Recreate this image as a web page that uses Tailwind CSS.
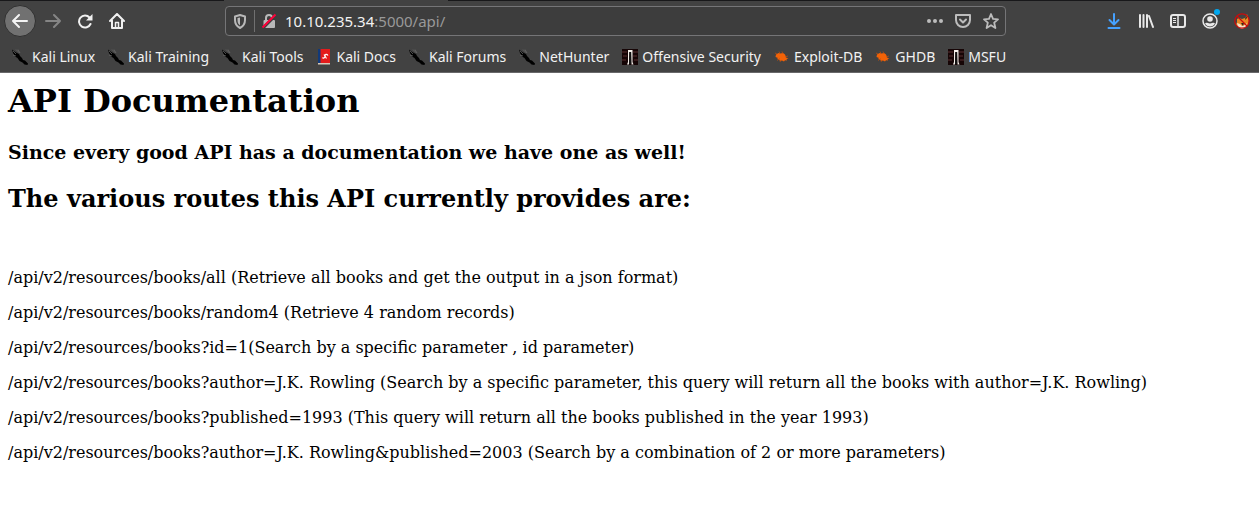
<!DOCTYPE html>
<html lang="en">
<head>
<meta charset="utf-8">
<title>API Documentation</title>
<script src="https://cdn.jsdelivr.net/npm/@tailwindcss/browser@4"></script>
</head>
<body class="bg-white text-black">
<svg class="hidden" aria-hidden="true">
  <symbol id="dragon" viewBox="0 0 16 16"><path fill="#000" d="M0 .5l2.500 2L5 4l2 1 1 2 2 2 1 2 2 .5 3 3-.5 1.500-3-.5-2-2-3-1.500-2-3L3 7.500 1 4z"/><path d="M1 2l3 3M4 .5L7.500 4M6 .5L8 4M1 6l3 1" stroke="#6d6d6d" stroke-width=".7"/></symbol>
  <symbol id="book" viewBox="0 0 16 16"><path fill="#e41b1b" d="M3 0h11v14H3z"/><path fill="#123a7a" d="M2 0h2.500v15H2z"/><path fill="#d8c8b8" d="M2 14h12v1.500H2z"/><path d="M6.500 8.500c1.500 1.500 2.500 0 2.500-1.500s1.500-2.500 3-.5M8 5.500l2.500 4" stroke="#fff" stroke-width="1.200" fill="none"/></symbol>
  <symbol id="tower" viewBox="0 0 16 16"><path fill="#160506" d="M0 0h16v16H0z"/><path d="M0 3h5M1 7h4M0 11h4M11 3h5M11 7h4M12 11h4" stroke="#583030" stroke-width="1.200"/><path fill="#f4eee9" d="M6 1h4.500v12l1 2.500H9.500L9 3H7.500L7 15.500H5L6 13z"/><path fill="#111" d="M7.300 3h1.900v12H7z"/></symbol>
  <symbol id="bug" viewBox="0 0 16 16"><path fill="#f26207" d="M2 5.500L4.500 4l2 .5L9 4l2 1.500L12.500 9l2 .5-2 .7.5 1.300-2-.3-1 1.300-2-1-2 .5-1-1.500L3 10l1-1-2.500-1z"/><path d="M1 4l2 1M5 2.500l1 2M8 2.500L9 5M3 11.500l3-2M14 7l-3 1M6 13l1-2" stroke="#c44e0c" stroke-width=".7"/></symbol>
</svg>

<header class="border-b border-[#68686a] bg-[#424242] font-['Noto_Sans',sans-serif] text-[#f2f2f2]">
  <div class="flex h-px" aria-hidden="true"><span class="w-56 bg-[#18181a]"></span><span class="w-56"></span><span class="flex-1 bg-[#18181a]"></span></div>
  <div class="flex h-10 items-center">
    <nav class="flex w-[225px] shrink-0 items-center pl-1" aria-label="Navigation">
      <button class="flex size-8 items-center justify-center rounded-full border border-[#303030] bg-[#717171]" aria-label="Back"><svg class="size-4" viewBox="0 0 16 16" fill="none" stroke="#f4f4f4" stroke-width="2" stroke-linecap="round" stroke-linejoin="round"><path d="M15 8H1M7 2L1 8l6 6"/></svg></button>
      <button class="flex h-8 w-[33px] items-center justify-center" aria-label="Forward"><svg class="size-4" viewBox="0 0 16 16" fill="none" stroke="#858585" stroke-width="2" stroke-linecap="round" stroke-linejoin="round"><path d="M1 8h14M9 2l6 6-6 6"/></svg></button>
      <button class="flex size-8 items-center justify-center" aria-label="Reload"><svg class="size-4" viewBox="0 0 16 16" fill="none" stroke="#f0f0f0" stroke-width="2" stroke-linecap="round"><path d="M12.500 4.500A6 6 0 1 0 13.500 11"/><path fill="#f0f0f0" stroke="none" d="M15.500 1v6.500H9z"/></svg></button>
      <button class="flex size-8 items-center justify-center" aria-label="Home"><svg class="size-4" viewBox="0 0 16 16" fill="none" stroke="#f0f0f0" stroke-width="2" stroke-linecap="round" stroke-linejoin="round"><path d="M1 8l7-7 7 7M3 7.500V15h10V7.500"/><path d="M6.500 15V9.500h3V15" stroke-width="1.500"/></svg></button>
    </nav>
    <div class="flex h-[30px] w-[781px] items-center rounded border border-[#757577] bg-[#3d3d3d] px-1.5">
      <svg class="size-4 shrink-0" viewBox="0 0 16 16"><path fill="none" stroke="#b8b8b8" stroke-width="2" stroke-linejoin="round" d="M8 2l5 1.500V7c0 4-2 6.500-5 8-3-1.500-5-4-5-8V3.500z"/><path fill="#b8b8b8" d="M8 4.500v8C6 11 5.500 9.500 5.500 7V5z"/></svg>
      <span class="mx-1.5 h-[22px] w-px bg-[#707070]"></span>
      <svg class="size-4 shrink-0" viewBox="0 0 16 16"><path fill="none" stroke="#b8b8b8" stroke-width="2" d="M5 8V5a3 3 0 0 1 6 0v3"/><rect x="2.500" y="7" width="11.500" height="8" rx="1" fill="#b8b8b8"/><path d="M2 15L15 2" stroke="#3d3d3d" stroke-width="3"/><path d="M1.500 14.500l13-13" stroke="#ff0039" stroke-width="2"/></svg>
      <div class="ml-2 flex-1 text-[15px] leading-5" role="textbox" aria-label="Address" tabindex="0">10.10.235.34<span class="text-[#999]">:5000/api/</span></div>
      <div class="flex items-center gap-3">
        <button aria-label="Page actions"><svg class="size-4" viewBox="0 0 16 16" fill="#bcbcbc"><circle cx="2" cy="8" r="2"/><circle cx="8" cy="8" r="2"/><circle cx="14" cy="8" r="2"/></svg></button>
        <button aria-label="Save to Pocket"><svg class="size-4" viewBox="0 0 16 16" fill="none" stroke="#bcbcbc" stroke-width="2" stroke-linejoin="round" stroke-linecap="round"><path d="M1 2h14v5a7 7 0 0 1-14 0zM5 6.500l3 3 3-3"/></svg></button>
        <button aria-label="Bookmark this page"><svg class="size-4" viewBox="0 0 16 16" fill="none" stroke="#bcbcbc" stroke-width="1.800" stroke-linejoin="round"><path d="M8 1l2 4.800 5 .5-3.800 3.400L12.400 15 8 12.200 3.600 15l1.200-5.300L1 6.300l5-.5z"/></svg></button>
      </div>
    </div>
    <div class="ml-auto flex items-center gap-4 pr-[9px]">
      <button aria-label="Downloads"><svg class="size-4" viewBox="0 0 16 16" fill="none" stroke="#45a1ff" stroke-width="2" stroke-linecap="round" stroke-linejoin="round"><path d="M8 1v10M3.500 7L8 11.500 12.500 7M2.500 15h11"/></svg></button>
      <button aria-label="Library"><svg class="size-4" viewBox="0 0 16 16" fill="none" stroke="#e8e8e8" stroke-width="2" stroke-linecap="round"><path d="M2 2v12M5.500 2v12M9 2v12M11 3l4 11"/></svg></button>
      <button aria-label="Sidebars"><svg class="size-4" viewBox="0 0 16 16" fill="none" stroke="#e8e8e8" stroke-width="2"><rect x="1" y="2" width="14" height="12" rx="2"/><path d="M8 2v12" stroke-width="1.500"/><path d="M3 5.500h3M3 7.500h3M3 9.500h3" stroke-width="1"/></svg></button>
      <button class="relative" aria-label="Account"><svg class="size-4" viewBox="0 0 16 16"><circle cx="8" cy="8" r="7" fill="none" stroke="#e8e8e8" stroke-width="1.500"/><circle cx="8" cy="6" r="2.800" fill="#e8e8e8"/><path fill="#e8e8e8" d="M3 10.500c1.500-1.500 2.500 0 5 0s3.500-1.500 5 0c-2 4-8 4-10 0z"/></svg><span class="absolute -top-1 left-3 size-1.5 rounded-full bg-[#00a8f0]"></span></button>
      <button aria-label="FoxyProxy"><svg class="size-4" viewBox="0 0 16 16"><path fill="#e88824" d="M3 6l2-1 3 1 3-1 2-4 2 6-1 5-4 3H6l-4-3 1-3z"/><path fill="#f3e2c9" d="M3 10l3 1 2 2 3-1 2-2-1 4-4 2-4-2z"/><path fill="#30251f" d="M7 10h3l-1 3zM12 2l1 3-2 2z"/><circle cx="8" cy="8" r="7.200" fill="none" stroke="#c80d0d" stroke-width="1.300"/><path d="M3 3l10 10" stroke="#c80d0d" stroke-width="1.300"/></svg></button>
    </div>
  </div>
  <nav class="flex h-[31px] items-center gap-[13px] whitespace-nowrap pl-3 text-sm" aria-label="Bookmarks">
    <a href="#" class="flex items-center gap-1"><svg class="size-4"><use href="#dragon"/></svg>Kali Linux</a>
    <a href="#" class="flex items-center gap-1"><svg class="size-4"><use href="#dragon"/></svg>Kali Training</a>
    <a href="#" class="flex items-center gap-1"><svg class="size-4"><use href="#dragon"/></svg>Kali Tools</a>
    <a href="#" class="flex items-center gap-1"><svg class="size-4"><use href="#book"/></svg>Kali Docs</a>
    <a href="#" class="flex items-center gap-1"><svg class="size-4"><use href="#dragon"/></svg>Kali Forums</a>
    <a href="#" class="flex items-center gap-1"><svg class="size-4"><use href="#dragon"/></svg>NetHunter</a>
    <a href="#" class="flex items-center gap-1"><svg class="size-4"><use href="#tower"/></svg>Offensive Security</a>
    <a href="#" class="flex items-center gap-1"><svg class="size-4"><use href="#bug"/></svg>Exploit-DB</a>
    <a href="#" class="flex items-center gap-1"><svg class="size-4"><use href="#bug"/></svg>GHDB</a>
    <a href="#" class="flex items-center gap-1"><svg class="size-4"><use href="#tower"/></svg>MSFU</a>
  </nav>
</header>

<main class="p-2 font-['DejaVu_Serif',serif] text-base leading-[19px]">
  <h1 class="text-[32px] leading-10 font-bold">API Documentation</h1>
  <h3 class="mt-5 text-[19px] leading-[22px] font-bold">Since every good API has a documentation we have one as well!</h3>
  <h2 class="mt-[22px] text-2xl leading-7 font-bold">The various routes this API currently provides are:</h2>
  <div class="mt-[55px] flex flex-col gap-4">
    <p>/api/v2/resources/books/all (Retrieve all books and get the output in a json format)</p>
    <p>/api/v2/resources/books/random4 (Retrieve 4 random records)</p>
    <p>/api/v2/resources/books?id=1(Search by a specific parameter , id parameter)</p>
    <p>/api/v2/resources/books?author=J.K. Rowling (Search by a specific parameter, this query will return all the books with author=J.K. Rowling)</p>
    <p>/api/v2/resources/books?published=1993 (This query will return all the books published in the year 1993)</p>
    <p>/api/v2/resources/books?author=J.K. Rowling&amp;published=2003 (Search by a combination of 2 or more parameters)</p>
  </div>
</main>
</body>
</html>
